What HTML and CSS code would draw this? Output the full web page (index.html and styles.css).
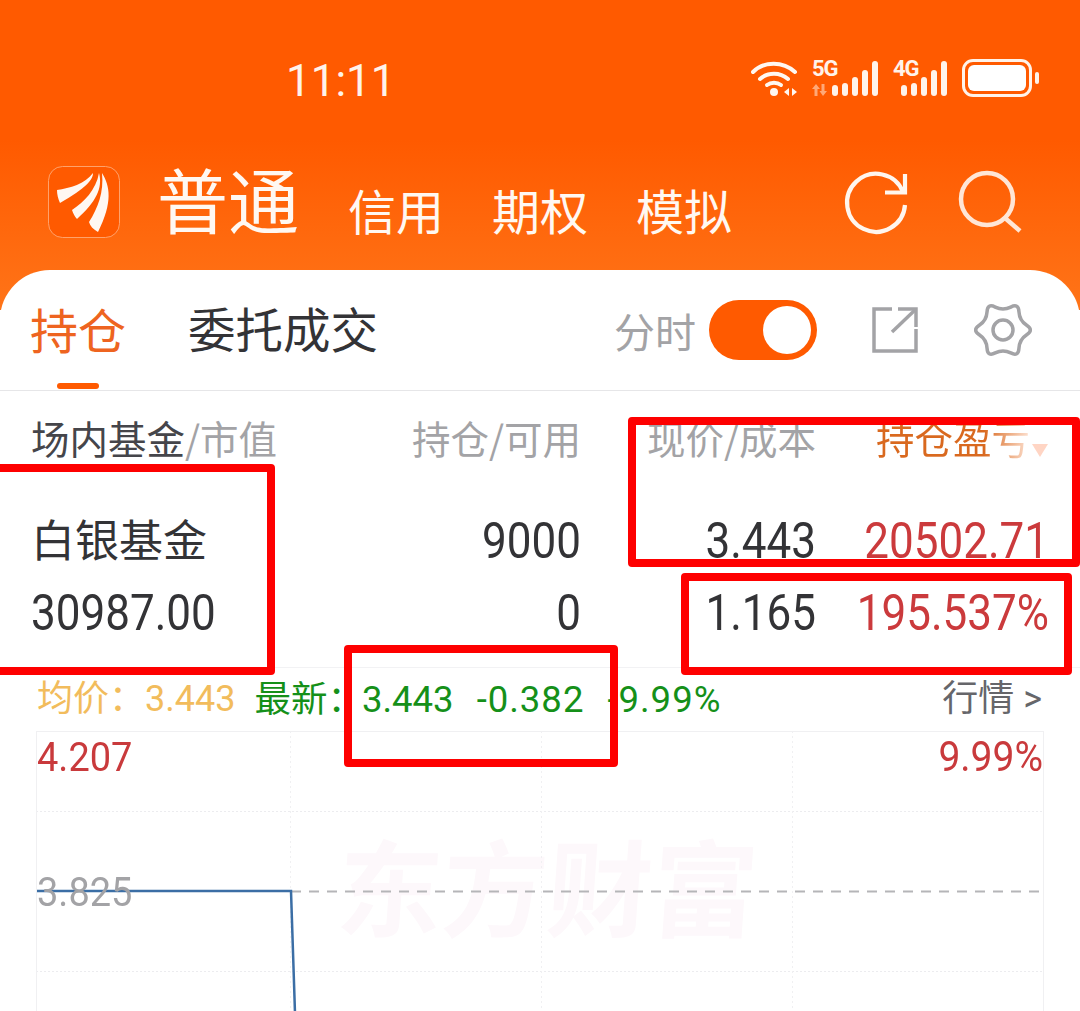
FILE: index.html
```html
<!DOCTYPE html>
<html lang="zh">
<head>
<meta charset="utf-8">
<title>持仓</title>
<link rel="stylesheet" href="styles.css">
</head>
<body>
<div class="page">
  <header class="top">
    <div class="status">
      <span class="time">11:11</span>
      <div class="status-icons">
        <svg class="ic-wifi" width="48" height="40" viewBox="0 0 48 40" fill="none" stroke="#fff7f0" stroke-width="4" stroke-linecap="round">
          <path d="M2 13C13 2 32 2 44 13"/><path d="M9 20C17 13 29 13 37 20"/><path d="M16 26C20 23 26 23 30 26"/>
          <circle cx="23" cy="33" r="4" fill="#fff7f0" stroke="none"/>
          <path d="M38 29l-5 4 5 4zM41 29l5 4-5 4z" fill="#fff7f0" stroke="none"/>
        </svg>
        <div class="sig sig-5g">
          <span class="sig-label">5G</span>
          <svg class="sig-arrows" width="15" height="12" viewBox="0 0 15 12" fill="#ffa877"><path d="M4 0l4 5H5.500v7h-3V5H0zM11 12L7.500 7H9.500V0h3v7H15z"/></svg>
          <div class="bars"><i class="b1"></i><i class="b2"></i><i class="b3"></i><i class="b4"></i><i class="b5"></i></div>
        </div>
        <div class="sig sig-4g">
          <span class="sig-label">4G</span>
          <div class="bars"><i class="b1"></i><i class="b2"></i><i class="b3"></i><i class="b4"></i><i class="b5"></i></div>
        </div>
        <div class="battery"><div class="battery-body"><i></i></div><b></b></div>
      </div>
    </div>
    <div class="nav">
      <svg class="logo" width="72" height="72" viewBox="0 0 72 72">
        <rect x="0.500" y="0.500" width="71" height="71" rx="14" fill="#ff5a00" stroke="#ffa26b"/>
        <path d="M9 24C22 22 37 18 45 7C45 14 38 22 12 37C10 33 9 28 9 24Z" fill="#fff8f2"/>
        <path d="M24 44C36 36 48 24 51 7C55 22 48 36 29 53C27 51 25 47 24 44Z" fill="#fff8f2"/>
        <path d="M41 56C50 42 56 26 54 7C62 20 65 36 50 66C45 63 42 60 41 56Z" fill="#fff8f2"/>
      </svg>
      <span class="nav-main">普通</span>
      <div class="nav-tabs"><span>信用</span><span>期权</span><span>模拟</span></div>
      <div class="nav-actions">
        <svg width="64" height="64" viewBox="0 0 64 64" fill="none" stroke="#fff6ee" stroke-width="4.200">
          <path d="M61 32A29 29 0 1 1 59 19"/><path d="M41 19.500H61V1"/>
        </svg>
        <svg width="64" height="64" viewBox="0 0 64 64" fill="none" stroke="#ffe6d6" stroke-width="4.500">
          <circle cx="29" cy="26" r="26"/><path d="M47 45L62 58"/>
        </svg>
      </div>
    </div>
  </header>

  <main class="card">
    <div class="tabs">
      <span class="tab tab-on">持仓</span>
      <span class="tab">委托成交</span>
      <div class="tools">
        <span class="tool-label">分时</span>
        <div class="switch"><i></i></div>
        <svg class="tool-share" width="46" height="46" viewBox="0 0 46 46" fill="none" stroke="#a3a3a6" stroke-width="3.500">
          <path d="M20 2H2V44H44V22"/><path d="M20 25L43 3"/><path d="M26 2H44V20"/>
        </svg>
        <svg class="tool-gear" width="54" height="54" viewBox="0 0 54 54" fill="none" stroke="#a3a3a6" stroke-width="3.500" stroke-linejoin="round">
          <path d="M50.700 31.750Q58 27 50.700 22.250Q43.450 17.500 42.970 8.800Q42.500 .15 34.750 4.080Q27 8 19.250 4.080Q11.500 .15 11.030 8.830Q10.550 17.500 3.280 22.250Q-4 27 3.280 31.750Q10.550 36.500 11.030 45.170Q11.500 53.850 19.250 49.920Q27 46 34.750 49.920Q42.500 53.850 42.970 45.170Q43.450 36.500 50.700 31.750Z"/>
          <circle cx="27" cy="27" r="10"/>
        </svg>
      </div>
    </div>

    <section class="holdings">
      <div class="row row-head">
        <span class="cell-left"><em>场内基金</em>/市值</span>
        <span>持仓/可用</span>
        <span>现价/成本</span>
        <span class="sort"><b>持仓盈亏</b><i></i></span>
      </div>
      <div class="row row-a">
        <span class="cell-left name">白银基金</span>
        <span class="num">9000</span>
        <span class="num">3.443</span>
        <span class="num up">20502.71</span>
      </div>
      <div class="row row-b">
        <span class="cell-left num">30987.00</span>
        <span class="num">0</span>
        <span class="num">1.165</span>
        <span class="num up">195.537%</span>
      </div>
    </section>

    <section class="quote">
      <div class="quote-line">
        <span class="avg">均价：3.443</span>
        <span class="last">最新：<span class="q1">3.443</span><span class="q2">-0.382</span><span class="q2">-9.99%</span></span>
        <span class="more">行情 &gt;</span>
      </div>
      <div class="chart">
        <span class="watermark">东方财富</span>
        <svg class="chart-lines" width="1008" height="282" viewBox="0 0 1008 282" fill="none">
          <path d="M0 80.500H1008M0 240.500H1008" stroke="#ececef" stroke-width="1" stroke-dasharray="2 2"/>
          <path d="M254.500 0V282M505.500 0V282M756.500 0V282" stroke="#f0f0f2" stroke-width="1" stroke-dasharray="2 3"/>
          <path d="M255 160.500H1008" stroke="#b5b5b8" stroke-width="2" stroke-dasharray="10 8"/>
          <path d="M0 160H255L259 282" stroke="#3b6ea5" stroke-width="2.500"/>
        </svg>
        <span class="lbl lbl-tl">4.207</span>
        <span class="lbl lbl-tr">9.99%</span>
        <span class="lbl lbl-ml">3.825</span>
      </div>
    </section>
  </main>

  <div class="mark mark-1"></div>
  <div class="mark mark-2"></div>
  <div class="mark mark-3"></div>
  <div class="mark mark-4"></div>
</div>
</body>
</html>
```

FILE: styles.css
```css
* { box-sizing: border-box; }
html, body { margin: 0; padding: 0; }
body {
  width: 1080px;
  height: 1011px;
  overflow: hidden;
  background: #fff;
  font-family: Roboto, "Noto Sans CJK SC", sans-serif;
}
.page { position: relative; width: 1080px; height: 1011px; overflow: hidden; }

.top {
  height: 310px;
  padding: 0 48px;
  background: linear-gradient(180deg, #ff5a00 0, #ff5a00 140px, #ff7418 310px);
  color: #fff;
}
.status { height: 166px; display: flex; align-items: flex-start; padding-top: 58px; }
.time {
  margin-left: 238px;
  font-size: 44px;
  line-height: 46px;
  color: #fff3ea;
}
.status-icons { margin-left: auto; margin-right: -7px; margin-top: 1px; display: flex; align-items: flex-start; }
.ic-wifi { margin-right: 13px; flex: none; }
.sig { position: relative; height: 37px; margin-right: 15px; flex: none; }
.sig-5g { width: 66px; }
.sig-4g { width: 54px; }
.sig-label {
  position: absolute; left: 0; top: 0;
  font: 700 22px/20px Roboto, sans-serif;
  color: #fff3ea;
  letter-spacing: -1px;
}
.sig-arrows { position: absolute; left: 0; top: 25px; }
.bars { position: absolute; right: 0; bottom: 0; display: flex; align-items: flex-end; gap: 4px; }
.bars i { display: block; width: 6px; border-radius: 3px; background: #fff3ea; }
.b1 { height: 11px; }
.b2 { height: 13px; }
.b3 { height: 19px; }
.b4 { height: 26px; }
.b5 { height: 35px; }
.battery { display: flex; align-items: center; height: 38px; }
.battery-body {
  width: 70px; height: 38px;
  border: 3px solid #fff3ea;
  border-radius: 11px;
  padding: 3px;
}
.battery-body i { display: block; width: 100%; height: 100%; border-radius: 6px; background: #fff; }
.battery b { display: block; width: 4px; height: 12px; margin-left: 3px; border-radius: 2px; background: #fff3ea; }

.nav { display: flex; align-items: flex-start; height: 72px; }
.logo { flex: none; }
.nav-main {
  margin-left: 37px;
  margin-top: -9px;
  font: 400 71px/80px "Noto Sans CJK SC", sans-serif;
  color: #fff8f2;
}
.nav-tabs {
  display: flex; gap: 48px;
  margin-left: 49px; margin-top: 8px;
  font: 400 48px/70px "Noto Sans CJK SC", sans-serif;
  color: #fff8f2;
}
.nav-actions { margin-left: auto; display: flex; gap: 50px; margin-right: 10px; margin-top: 7px; }
.nav-actions svg { flex: none; overflow: visible; }

.card {
  position: absolute;
  left: 0; right: 0; top: 270px; bottom: 0;
  background: #fff;
  border-radius: 50px 50px 0 0;
  overflow: hidden;
}
.tabs {
  height: 121px;
  border-bottom: 1px solid #e6e6e8;
  padding: 0 50px 0 30px;
  display: flex;
  align-items: flex-start;
  font-family: "Noto Sans CJK SC", sans-serif;
}
.tab { font-size: 47.500px; line-height: 60px; margin-top: 28px; margin-right: 62px; color: #333336; position: relative; white-space: nowrap; }
.tab-on { font-size: 48px; color: #ee6420; }
.tab-on::after {
  content: ""; position: absolute; left: 27px; top: 85px;
  width: 42px; height: 6px; border-radius: 3px; background: #ff5a00;
}
.tools { margin-left: auto; display: flex; align-items: flex-start; }
.tool-label { font-size: 41px; line-height: 50px; color: #a3a3a6; margin-top: 35px; margin-right: 13px; }
.switch {
  width: 108px; height: 60px; margin-top: 30px;
  border-radius: 30px; background: #ff5a00;
  padding: 6px 6px 6px 54px;
}
.switch i { display: block; width: 48px; height: 48px; border-radius: 50%; background: #fff; }
.tool-share { margin: 37px 0 0 55px; overflow: visible; }
.tool-gear { margin: 33px 0 0 58px; overflow: visible; }

.row {
  display: grid;
  grid-template-columns: 300px 250px 235px 233px;
  padding: 0 0 0 31px;
  justify-items: end;
  color: #333336;
}
.row-head { height: 114px; padding-top: 21px; font: 400 38.500px/50px "Noto Sans CJK SC", sans-serif; color: #a3a3a6; }
.row-head em { font-style: normal; font-size: 38.500px; color: #45454a; }
.row-a, .row-b { height: 72px; font-size: 44px; line-height: 72px; }
.num { transform: scaleY(1.12); }
.cell-left { justify-self: start; }
.name { font-family: "Noto Sans CJK SC", sans-serif; font-size: 44px; line-height: 66px; }
.up { color: #cb3a3c; }
.sort { position: relative; padding-right: 19px; }
.sort b {
  font-weight: 400;
  background: linear-gradient(90deg, #d9691f 0, #d9691f 70%, #fde3d4 100%);
  -webkit-background-clip: text;
  background-clip: text;
  color: transparent;
}
.sort i {
  position: absolute; right: 1px; top: 32px;
  border-left: 8px solid transparent; border-right: 8px solid transparent;
  border-top: 13px solid #ffd5c4;
}

.quote { margin-top: 18px; padding: 0 36px; border-top: 1px solid #f2f2f4; }
.quote-line {
  display: flex; height: 63px; align-items: flex-start;
  font: 400 36.500px/63px Roboto, "Noto Sans CJK SC", sans-serif;
}
.avg { color: #f2bc5c; margin-left: 1px; font-size: 36px; }
.last { color: #159019; margin-left: 19px; }
.q1 { margin-left: -2px; }
.q2 { margin-left: 23px; letter-spacing: 1px; }
.more { margin-left: auto; margin-right: 2px; color: #66666a; font-size: 36px; }

.chart {
  position: relative;
  width: 1008px;
  height: 281px;
  border: 1px solid #f0f0f2;
  border-bottom: 0;
  overflow: hidden;
}
.chart-lines { position: absolute; left: -1px; top: -1px; }
.watermark {
  position: absolute; left: 301px; top: 91px;
  font: 700 105px/120px "Noto Sans CJK SC", sans-serif;
  color: #fdf8fb;
  white-space: nowrap;
  transform: skewX(-4deg);
}
.lbl { position: absolute; font-size: 38px; line-height: 40px; transform: scaleY(1.08); }
.lbl-tl { left: 0; top: 5px; color: #c93a3c; }
.lbl-tr { right: 0; top: 5px; color: #c93a3c; font-size: 39px; }
.lbl-ml { left: 0; top: 140px; color: #a3a3a6; }

.mark { position: absolute; border: 8px solid #fe0000; border-radius: 4px; pointer-events: none; }
.mark-1 { left: 628px; top: 417px; width: 452px; height: 150px; }
.mark-2 { left: 681px; top: 573px; width: 391px; height: 102px; }
.mark-3 { left: -10px; top: 464px; width: 285px; height: 211px; }
.mark-4 { left: 344px; top: 645px; width: 274px; height: 122px; }
```
